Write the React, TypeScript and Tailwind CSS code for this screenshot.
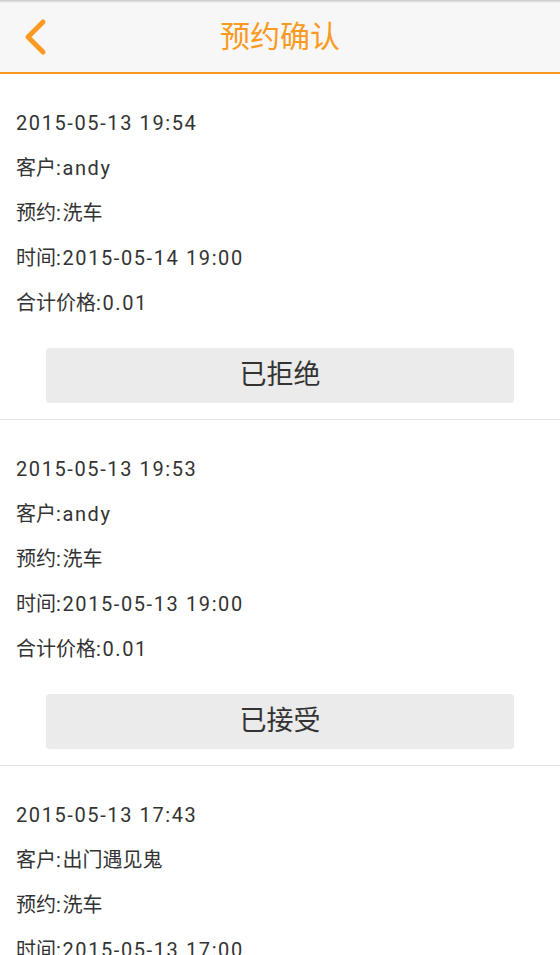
import React from "react";

type Item = {
  created: string;
  customer: string;
  customerCjk?: boolean;
  service: string;
  time: string;
  price: string;
  status?: string;
};

const items: Item[] = [
  { created: "2015-05-13 19:54", customer: "andy", service: "洗车", time: "2015-05-14 19:00", price: "0.01", status: "已拒绝" },
  { created: "2015-05-13 19:53", customer: "andy", service: "洗车", time: "2015-05-13 19:00", price: "0.01", status: "已接受" },
  { created: "2015-05-13 17:43", customer: "出门遇见鬼", customerCjk: true, service: "洗车", time: "2015-05-13 17:00", price: "0.01" },
];

const font = { fontFamily: 'Roboto, "Noto Sans CJK SC", sans-serif' };

function Row({ children }: { children: React.ReactNode }) {
  return <div className="h-[45px] flex items-center text-[20px] text-[#333333] leading-none whitespace-nowrap">{children}</div>;
}

function L({ children }: { children: React.ReactNode }) {
  return <span className="tracking-[1.6px]">{children}</span>;
}

export default function App() {
  return (
    <div className="w-[560px] h-[955px] overflow-hidden bg-white" style={font}>
      <div className="relative h-[74px] bg-[#f7f7f7] border-b-2 border-[#fa9a22] flex items-center justify-center">
        <div className="absolute top-0 left-0 right-0 h-[3px] bg-gradient-to-b from-[#c8c8c8] to-[#f7f7f7]" />
        <svg className="absolute left-[22px] top-[17px]" width="30" height="40" viewBox="0 0 30 40">
          <polyline points="21,5 6,20 21,35" fill="none" stroke="#fa9a22" strokeWidth="5" strokeLinecap="round" strokeLinejoin="round" />
        </svg>
        <span className="text-[30px] text-[#fa9a22] leading-none mt-[2px]">预约确认</span>
      </div>
      {items.map((it, i) => (
        <div key={i} className="pt-[26px] pb-[16px] px-[16px] border-b border-[#e2e2e2]">
          <Row><L>{it.created}</L></Row>
          <Row>客户<L>:</L>{it.customerCjk ? it.customer : <L>{it.customer}</L>}</Row>
          <Row>预约<L>:</L>{it.service}</Row>
          <Row>时间<L>:{it.time}</L></Row>
          <Row>合计价格<L>:{it.price}</L></Row>
          {it.status && (
            <div className="mt-[23px] mx-[30px] h-[55px] rounded-[4px] bg-[#ebebeb] flex items-center justify-center text-[27px] text-[#333333]">
              {it.status}
            </div>
          )}
        </div>
      ))}
    </div>
  );
}
